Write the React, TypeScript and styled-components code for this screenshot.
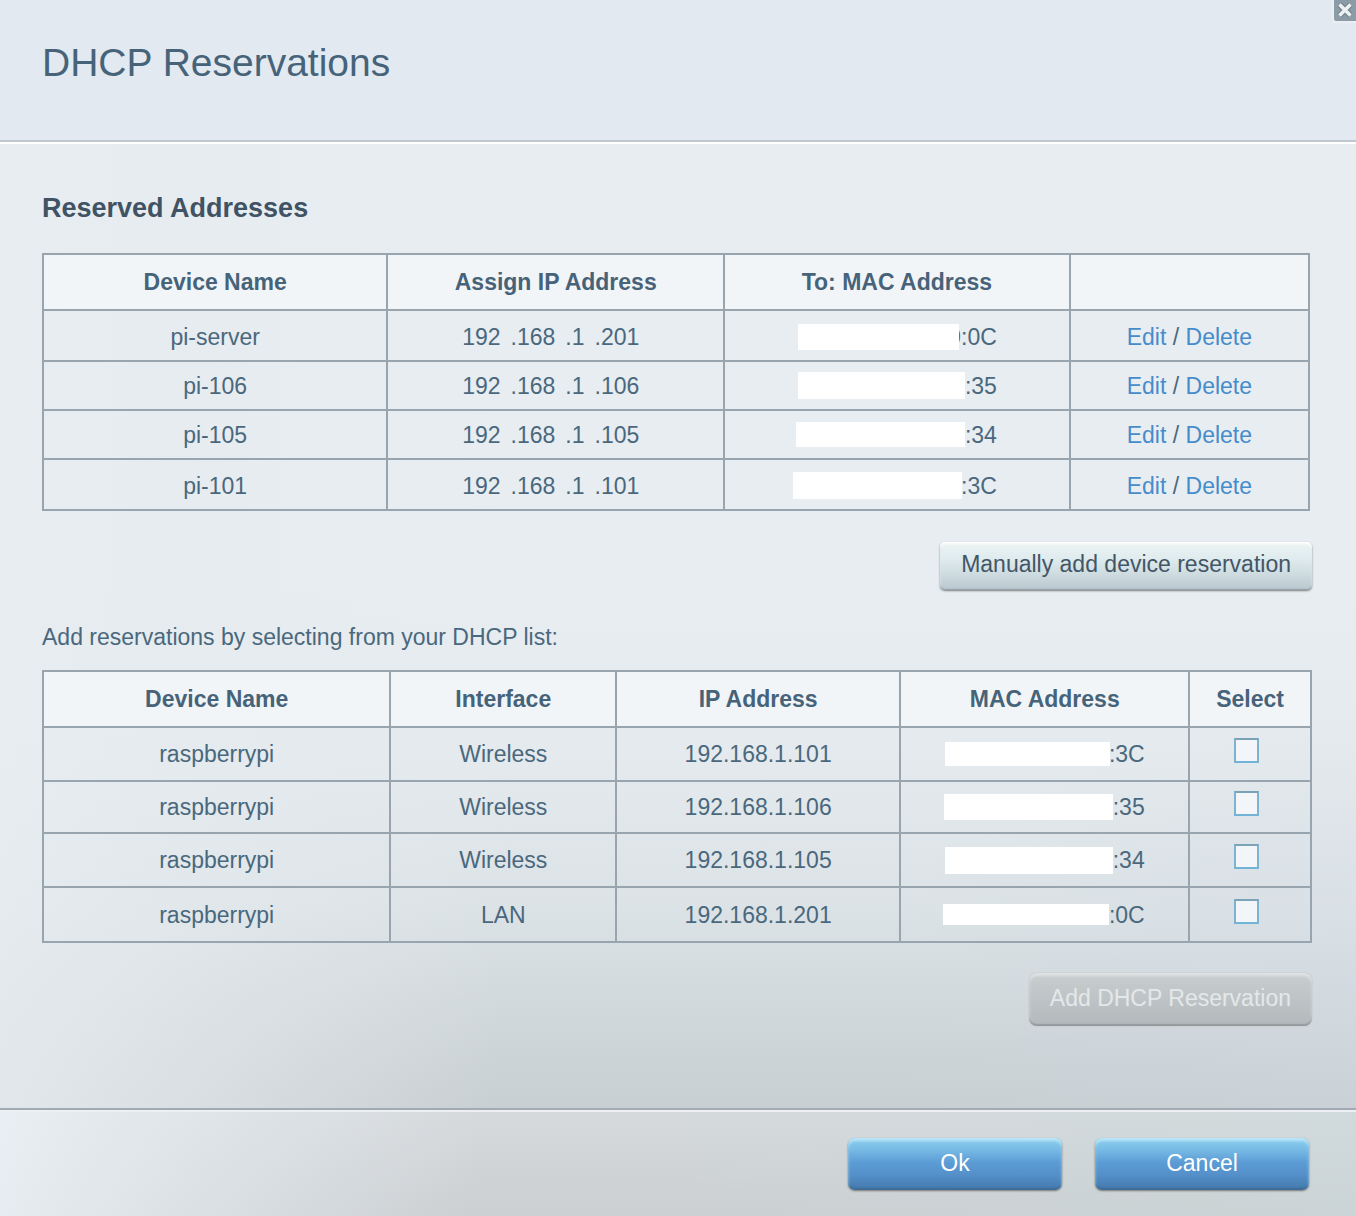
import React, { useState } from "react";
import styled, { createGlobalStyle } from "styled-components";

const GlobalStyle = createGlobalStyle`
  *, *::before, *::after { box-sizing: border-box; }
  body {
    margin: 0;
    background: #cbd1d4;
    color: #4a687d;
    font-family: "Liberation Sans", Arial, Helvetica, sans-serif;
    font-size: 23px;
    line-height: 28px;
  }
`;

const Dialog = styled.div`
  display: flex;
  flex-direction: column;
  min-height: 100vh;
`;

const Header = styled.header`
  display: flex;
  align-items: flex-start;
  justify-content: space-between;
  border-bottom: 2px solid #c1c8cd;
  background: #e2e9f0;
`;

const Title = styled.h1`
  margin: 0;
  padding: 41px 0 55px 42px;
  color: #466379;
  font-size: 39px;
  line-height: 44px;
  font-weight: 400;
`;

const CloseButton = styled.button`
  display: flex;
  padding: 0;
  border: 0;
  background: none;
  cursor: pointer;
`;

const Body = styled.main`
  flex: 1;
  padding: 48px 44px 82px 42px;
  border-top: 2px solid #fff;
  background:
    linear-gradient(to right, rgba(231, 237, 241, 0.8) 0, rgba(229, 235, 238, 0.6) 170px, rgba(228, 234, 238, 0) 500px),
    radial-gradient(ellipse 480px 280px at 100% 88%, rgba(208, 217, 232, 0.3), rgba(208, 217, 232, 0)),
    linear-gradient(to bottom, #e8edf1 0, #e8edf1 46%, #e4eaed 63%, #dce3e6 79%, #d2d9dc 89%, #c8cfd2 100%);
`;

const SectionTitle = styled.h2`
  margin: 0 0 29px;
  color: #3f5364;
  font-size: 27px;
  line-height: 32px;
  font-weight: 700;
`;

const Intro = styled.p`
  margin: 33px 0 19px;
`;

const ReservedArea = styled.div`
  padding-right: 2px;
`;

const Table = styled.table`
  width: 100%;
  table-layout: fixed;
  border-collapse: collapse;
  text-align: center;
`;

const Col = styled.col<{ $share: number }>`
  width: ${(p) => p.$share}%;
`;

const HeadCell = styled.th`
  height: 56px;
  padding: 0;
  border: 2px solid #98a5af;
  background: #f1f5f8;
  color: #466379;
  font-weight: 700;
`;

const Row = styled.tr<{ $height: number }>`
  height: ${(p) => p.$height}px;
`;

const Cell = styled.td<{ $drop?: boolean }>`
  padding: ${(p) => (p.$drop ? "2px 0 0" : "0")};
  border: 2px solid #98a5af;
`;

const CheckCell = styled(Cell)`
  padding-bottom: 7px;
  padding-right: 7px;
`;

const Octets = styled.span`
  display: inline-flex;
  gap: 10px;
  padding-right: 10px;
`;

const Mac = styled.span`
  display: inline-flex;
  align-items: center;
  justify-content: flex-end;
  width: 200px;
  height: 28px;
  vertical-align: top;
`;

const Mask = styled.span<{ $width: number; $height: number; $overlap: number }>`
  position: relative;
  flex: none;
  width: ${(p) => p.$width}px;
  height: ${(p) => p.$height}px;
  margin-right: ${(p) => -p.$overlap}px;
  background: #fff;
`;

const Link = styled.a`
  color: #468ccb;
  text-decoration: none;
`;

const Check = styled.input`
  display: block;
  appearance: none;
  width: 25px;
  height: 25px;
  margin: 0 auto;
  border: 2px solid;
  border-color: #7ca2b8 #7fb2d0 #74b3d8;
  background: #f3f6f8;
  cursor: pointer;

  &:checked {
    background: #5b9bd3;
  }
`;

const ButtonRow = styled.div<{ $top: number }>`
  display: flex;
  justify-content: flex-end;
  margin-top: ${(p) => p.$top}px;
`;

const BaseButton = styled.button`
  padding: 0 21px 2px;
  border: 0;
  font: inherit;
  cursor: pointer;
`;

const LightButton = styled(BaseButton)`
  height: 48px;
  padding-bottom: 4px;
  border-radius: 5px;
  color: #435666;
  background: linear-gradient(to bottom, #eef4f5 0, #dfebed 35%, #d2dfe3 60%, #b9c8cf 100%);
  box-shadow:
    inset 0 2px 2px rgba(255, 255, 255, 0.9),
    inset 0 -1px 1px rgba(125, 140, 148, 0.7),
    0 1px 2px rgba(80, 80, 80, 0.7);
`;

const DisabledButton = styled(BaseButton)`
  height: 53px;
  padding-bottom: 4px;
  border-radius: 8px;
  color: #e4e8ea;
  background: linear-gradient(to bottom, #c8cdcf 0, #bec4c6 50%, #b2b8bb 100%);
  box-shadow:
    inset 0 3px 3px rgba(230, 233, 235, 0.8),
    inset 0 -2px 1px rgba(130, 135, 138, 0.6),
    0 0 1px rgba(95, 95, 95, 0.6);
  cursor: default;
`;

const BlueButton = styled(BaseButton)`
  width: 214px;
  height: 52px;
  border-radius: 7px;
  color: #fff;
  background: linear-gradient(to bottom, #8dcdee 0, #7abde6 20%, #5b9bd5 48%, #5590ca 70%, #4379ac 100%);
  box-shadow:
    inset 0 3px 3px rgba(190, 232, 250, 0.9),
    inset 0 -2px 2px rgba(58, 98, 135, 0.6),
    0 1px 2px rgba(100, 95, 90, 0.8);
`;

const Footer = styled.footer`
  display: flex;
  justify-content: flex-end;
  gap: 33px;
  padding: 28px 47px 26px;
  border-top: 2px solid #a2abb3;
  box-shadow: inset 0 2px 0 #edf0f3;
  background:
    linear-gradient(to right, rgba(237, 243, 248, 0.8) 0, rgba(234, 239, 243, 0.6) 160px, rgba(225, 229, 232, 0) 480px),
    linear-gradient(to right, rgba(203, 217, 218, 0) 50%, rgba(203, 217, 218, 0.5) 100%),
    linear-gradient(to bottom, #d6dadd, #cbcfd2);
`;

type MacInfo = { tail: string; width: number; height: number; overlap: number };

type Reservation = { name: string; ip: string[]; mac: MacInfo; height: number; drop: boolean };

type Lease = { name: string; link: string; ip: string; mac: MacInfo; height: number };

const reservations: Reservation[] = [
  { name: "pi-server", ip: ["192", ".168", ".1", ".201"], mac: { tail: "9:0C", width: 161, height: 26, overlap: 11 }, height: 51, drop: true },
  { name: "pi-106", ip: ["192", ".168", ".1", ".106"], mac: { tail: ":35", width: 167, height: 27, overlap: 0 }, height: 49, drop: false },
  { name: "pi-105", ip: ["192", ".168", ".1", ".105"], mac: { tail: ":34", width: 169, height: 25, overlap: 0 }, height: 49, drop: false },
  { name: "pi-101", ip: ["192", ".168", ".1", ".101"], mac: { tail: ":3C", width: 169, height: 27, overlap: 1 }, height: 51, drop: true },
];

const leases: Lease[] = [
  { name: "raspberrypi", link: "Wireless", ip: "192.168.1.101", mac: { tail: ":3C", width: 165, height: 24, overlap: 1 }, height: 54 },
  { name: "raspberrypi", link: "Wireless", ip: "192.168.1.106", mac: { tail: ":35", width: 169, height: 26, overlap: 0 }, height: 52 },
  { name: "raspberrypi", link: "Wireless", ip: "192.168.1.105", mac: { tail: ":34", width: 168, height: 27, overlap: 0 }, height: 54 },
  { name: "raspberrypi", link: "LAN", ip: "192.168.1.201", mac: { tail: ":0C", width: 166, height: 21, overlap: 0 }, height: 55 },
];

function MacAddress({ mac }: { mac: MacInfo }) {
  return (
    <Mac>
      <Mask $width={mac.width} $height={mac.height} $overlap={mac.overlap} />
      {mac.tail}
    </Mac>
  );
}

function CloseIcon() {
  return (
    <svg width="24" height="24" viewBox="0 0 24 24" aria-hidden="true">
      <rect x="0" y="-3" width="27" height="26" rx="3" fill="#e9eff3" />
      <rect x="2" y="-3" width="25" height="24" rx="2" fill="#8c9ca7" />
      <path d="M7.500 4.500 18.500 15.500M18.500 4.500 7.500 15.500" stroke="#748590" strokeWidth="6" />
      <path d="M7.500 4.500 18.500 15.500M18.500 4.500 7.500 15.500" stroke="#edf1f3" strokeWidth="3.500" />
    </svg>
  );
}

export default function App() {
  const [selected, setSelected] = useState<boolean[]>(leases.map(() => false));
  const toggle = (index: number) =>
    setSelected((current) => current.map((value, i) => (i === index ? !value : value)));

  return (
    <>
      <GlobalStyle />
      <Dialog role="dialog" aria-labelledby="dialog-title">
        <Header>
          <Title id="dialog-title">DHCP Reservations</Title>
          <CloseButton type="button" aria-label="Close">
            <CloseIcon />
          </CloseButton>
        </Header>
        <Body>
          <SectionTitle id="reserved-title">Reserved Addresses</SectionTitle>
          <ReservedArea>
            <Table aria-labelledby="reserved-title">
              <colgroup>
                <Col $share={27.2} />
                <Col $share={26.6} />
                <Col $share={27.3} />
                <Col $share={18.9} />
              </colgroup>
              <thead>
                <tr>
                  <HeadCell scope="col">Device Name</HeadCell>
                  <HeadCell scope="col">Assign IP Address</HeadCell>
                  <HeadCell scope="col">To: MAC Address</HeadCell>
                  <HeadCell scope="col" aria-label="Actions" />
                </tr>
              </thead>
              <tbody>
                {reservations.map((item) => (
                  <Row key={item.name} $height={item.height}>
                    <Cell $drop={item.drop}>{item.name}</Cell>
                    <Cell $drop={item.drop}>
                      <Octets>
                        {item.ip.map((part, i) => (
                          <span key={i}>{part}</span>
                        ))}
                      </Octets>
                    </Cell>
                    <Cell $drop={item.drop}>
                      <MacAddress mac={item.mac} />
                    </Cell>
                    <Cell $drop={item.drop}>
                      <Link href="#edit">Edit</Link> / <Link href="#delete">Delete</Link>
                    </Cell>
                  </Row>
                ))}
              </tbody>
            </Table>
          </ReservedArea>
          <ButtonRow $top={31}>
            <LightButton type="button">Manually add device reservation</LightButton>
          </ButtonRow>
          <Intro id="lease-intro">Add reservations by selecting from your DHCP list:</Intro>
          <Table aria-labelledby="lease-intro">
            <colgroup>
              <Col $share={27.4} />
              <Col $share={17.8} />
              <Col $share={22.4} />
              <Col $share={22.8} />
              <Col $share={9.6} />
            </colgroup>
            <thead>
              <tr>
                <HeadCell scope="col">Device Name</HeadCell>
                <HeadCell scope="col">Interface</HeadCell>
                <HeadCell scope="col">IP Address</HeadCell>
                <HeadCell scope="col">MAC Address</HeadCell>
                <HeadCell scope="col">Select</HeadCell>
              </tr>
            </thead>
            <tbody>
              {leases.map((lease, index) => (
                <Row key={lease.ip} $height={lease.height}>
                  <Cell>{lease.name}</Cell>
                  <Cell>{lease.link}</Cell>
                  <Cell>{lease.ip}</Cell>
                  <Cell>
                    <MacAddress mac={lease.mac} />
                  </Cell>
                  <CheckCell>
                    <Check
                      type="checkbox"
                      aria-label={`Select ${lease.ip}`}
                      checked={selected[index]}
                      onChange={() => toggle(index)}
                    />
                  </CheckCell>
                </Row>
              ))}
            </tbody>
          </Table>
          <ButtonRow $top={30}>
            <DisabledButton type="button" disabled={!selected.some(Boolean)}>
              Add DHCP Reservation
            </DisabledButton>
          </ButtonRow>
        </Body>
        <Footer>
          <BlueButton type="button">Ok</BlueButton>
          <BlueButton type="button">Cancel</BlueButton>
        </Footer>
      </Dialog>
    </>
  );
}
